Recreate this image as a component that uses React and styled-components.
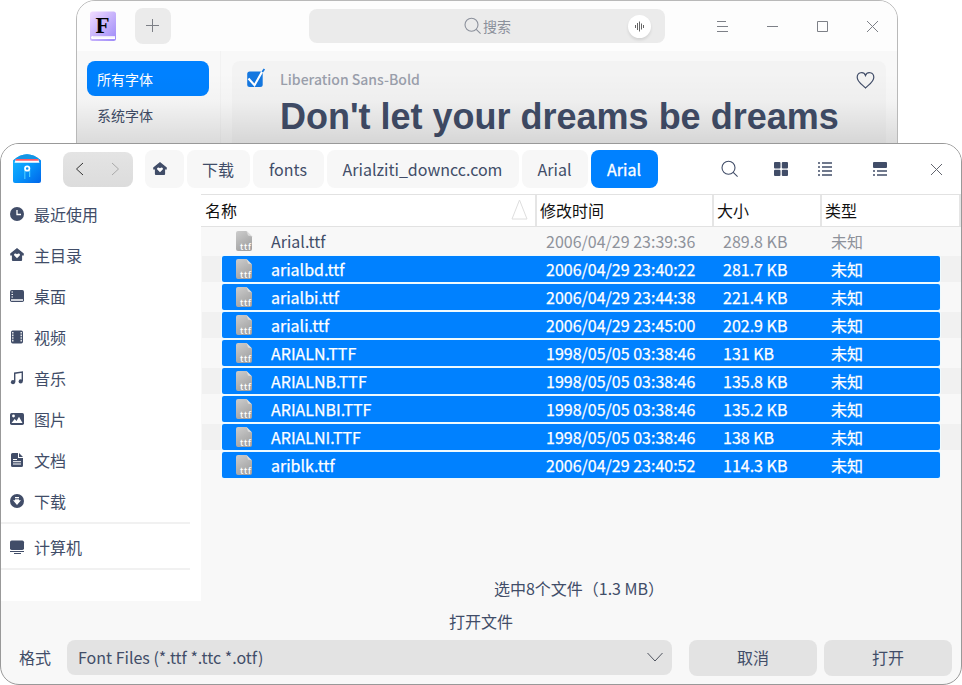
import React from "react";
import styled, { createGlobalStyle, css } from "styled-components";

const GlobalStyle = createGlobalStyle`
  * { box-sizing: border-box; }
  body {
    margin: 0;
    background: #fff;
    color: #414d68;
    font: 16px/24px "Noto Sans CJK SC", "Noto Sans", sans-serif;
    overflow: hidden;
  }
  svg { display: block; flex: none; }
`;

const Desktop = styled.div`
  position: relative;
  width: 962px;
  height: 685px;
  overflow: hidden;
`;

/* ---------- font manager window ---------- */

const ManagerWindow = styled.section`
  position: absolute;
  left: 76px;
  top: 0;
  width: 822px;
  height: 200px;
  border: 1px solid #b9b9b9;
  border-radius: 19px 19px 0 0;
  background: #f8f8f8;
  overflow: hidden;
`;

const ManagerTitlebar = styled.header`
  display: flex;
  align-items: center;
  height: 50px;
  padding: 0 18px 0 12px;
  background: #fdfdfd;
`;

const AddButton = styled.button`
  display: grid;
  place-items: center;
  width: 36px;
  height: 36px;
  margin: 0 138px 0 18px;
  padding: 0 1px 1px 0;
  border: 0;
  border-radius: 8px;
  background: #ebebeb;
`;

const SearchBox = styled.div`
  display: flex;
  align-items: center;
  width: 356px;
  height: 34px;
  padding: 0 14px 0 155px;
  border-radius: 8px;
  background: #ebebeb;
  color: #8b909b;
  font-size: 14px;
`;

const SearchLabel = styled.span`
  flex: 1;
  margin-left: 1px;
`;

const VoiceButton = styled.span`
  display: grid;
  place-items: center;
  width: 23px;
  height: 23px;
  border-radius: 50%;
  background: #fff;
  box-shadow: 0 2px 3px rgba(0, 0, 0, 0.1);
`;

const WindowControls = styled.div`
  display: flex;
  gap: 36px;
  margin-left: auto;
  padding-top: 2px;
`;

const ManagerBody = styled.div`
  display: flex;
  height: 150px;
`;

const CategoryList = styled.nav`
  width: 144px;
  padding: 10px 10px 0;
  border-right: 1px solid #f2f2f2;
`;

const Category = styled.div`
  width: 122px;
  height: 35px;
  margin-bottom: 2px;
  padding: 0 10px;
  border-radius: 8px;
  font-size: 14px;
  line-height: ${(p) => (p.$active ? 36 : 34)}px;
  background: ${(p) => (p.$active ? "#0081ff" : "transparent")};
  color: ${(p) => (p.$active ? "#fff" : "#414d68")};
`;

const PreviewCard = styled.article`
  display: flex;
  align-items: flex-start;
  width: 654px;
  margin: 10px 0 0 11px;
  padding: 7px 11px 0 13px;
  border-radius: 8px;
  background: #f3f3f3;
`;

const PreviewText = styled.div`
  flex: 1;
  margin-left: 13px;
`;

const FontName = styled.div`
  font-size: 14px;
  line-height: 23px;
  color: #9a9fab;
  font-weight: 500;
`;

const Sample = styled.div`
  font: bold 36px/41px "Liberation Sans", Arial, sans-serif;
  margin-top: 5px;
  white-space: nowrap;
`;

const FavoriteSlot = styled.span`
  padding-top: 3px;
`;

const Shade = styled.div`
  position: absolute;
  inset: 72px 0 auto;
  height: 71px;
  background: linear-gradient(rgba(0, 0, 0, 0) 0%, rgba(0, 0, 0, 0.02) 40%, rgba(0, 0, 0, 0.12) 100%);
`;

/* ---------- file dialog ---------- */

const Dialog = styled.section`
  position: absolute;
  left: 0;
  top: 143px;
  width: 962px;
  height: 542px;
  display: flex;
  flex-direction: column;
  border: 1px solid #999;
  border-radius: 19px;
  background: #f8f8f8;
  overflow: hidden;
`;

const Toolbar = styled.header`
  display: flex;
  align-items: center;
  height: 50px;
  padding: 0 17px 0 11px;
  background: #fff;
`;

const HistoryButtons = styled.div`
  display: flex;
  align-items: center;
  justify-content: space-between;
  width: 70px;
  height: 35px;
  margin: 0 12px 0 21px;
  padding: 0 12px 0 11px;
  border-radius: 8px;
  background: linear-gradient(#e4e4e4, #dcdcdc);
`;

const Breadcrumbs = styled.nav`
  display: flex;
  gap: 3px;
`;

const Crumb = styled.button`
  display: grid;
  place-items: center;
  width: ${(p) => p.$width}px;
  height: 38px;
  padding: 0 1px 0 0;
  border: 0;
  border-radius: 8px;
  font: inherit;
  -webkit-text-stroke: ${(p) => (p.$active ? "0.3px" : "0")};
  background: ${(p) => (p.$active ? "#0081ff" : "#f7f7f7")};
  color: ${(p) => (p.$active ? "#fff" : "#414d68")};
  white-space: nowrap;
`;

const HomeIconSlot = styled.span`
  margin-right: 8px;
`;

const ViewTools = styled.div`
  display: grid;
  grid-template-columns: 53px 44px 55px 57px 14px;
  align-items: center;
  margin-left: auto;
`;

const DialogBody = styled.div`
  display: flex;
  height: 407px;
`;

const Sidebar = styled.aside`
  width: 200px;
  background: #fff;
`;

const PlaceGroup = styled.div`
  width: 189px;
  padding-top: ${(p) => p.$top || 0}px;
  border-bottom: 2px solid #f1f1f1;
`;

const Place = styled.div`
  display: flex;
  align-items: center;
  gap: 9px;
  height: 41px;
  padding: 0 0 2px 9px;

  svg { margin-top: 1px; }
`;

const FilePane = styled.main`
  flex: 1;
  display: flex;
  flex-direction: column;
`;

const TableHead = styled.div`
  display: grid;
  grid-template-columns: 336px 177px 108px 139px;
  height: 33px;
  margin-bottom: 2px;
  border: solid #e2e2e2;
  border-width: 1px 0;
  background: #fff;
  color: #111;
`;

const HeadCell = styled.div`
  display: flex;
  align-items: center;
  justify-content: space-between;
  padding: 0 7px 2px ${(p) => (p.$first ? 4 : 3)}px;
  border-right: 2px solid #e5e5e5;
`;

const Rows = styled.div`
  display: flex;
  flex-direction: column;
  gap: 2px;
  margin-top: -1px;
`;

const RowStripe = styled.div`
  height: 26px;
  padding: 0 21px;
  background: linear-gradient(${(p) => (p.$odd ? "#f1f1f1, #f1f1f1" : "#f8f8f8, #f8f8f8")}) 1px 0 no-repeat;
`;

const FileRow = styled.div`
  display: grid;
  grid-template-columns: 49px 275px 177px 108px 1fr;
  align-items: center;
  height: 26px;
  border-radius: 2px;
  color: #8e929b;
  ${(p) =>
    p.$selected &&
    css`
      background: #0081ff;
      color: #fff;
      -webkit-text-stroke: 0.25px;
      box-shadow: 0 0 0 1px #edfaff;
    `}
`;

const IconCell = styled.span`
  padding-left: 13px;
  -webkit-text-stroke: 0;
`;

const FileName = styled.span`
  color: ${(p) => (p.$selected ? "#fff" : "#414d68")};
`;

const Status = styled.div`
  margin: auto 4px 1px 0;
  text-align: center;
`;

const Footer = styled.footer`
  flex: 1;
`;

const ActionTitle = styled.div`
  height: 38px;
  padding-top: 8px;
  text-align: center;
`;

const FormatRow = styled.div`
  display: flex;
  align-items: center;
  height: 37px;
  padding: 0 9px 0 18px;
`;

const FormatLabel = styled.span`
  padding-bottom: 2px;
`;

const FormatSelect = styled.div`
  display: flex;
  align-items: center;
  justify-content: space-between;
  width: 605px;
  height: 35px;
  margin: 0 17px 0 16px;
  padding: 0 9px 1px 11px;
  border-radius: 8px;
  background: #e3e3e3;
`;

const ActionButton = styled.button`
  width: 128px;
  height: 36px;
  margin-right: ${(p) => (p.$last ? 0 : 7)}px;
  padding: 0 0 2px;
  border: 0;
  border-radius: 8px;
  background: #e3e3e3;
  color: #414d68;
  font: inherit;
`;

/* ---------- icons ---------- */

const INK = "#414d68";

const LineIcon = ({ size = 13, d, color = "#7d8087", width = 1 }) => (
  <svg width={size} height={size} viewBox={`0 0 ${size} ${size}`} fill="none" stroke={color} strokeWidth={width}>
    <path d={d} />
  </svg>
);

const SearchIcon = ({ size = 18, color = INK }) => (
  <svg width={size} height={size} viewBox="0 0 18 18" fill="none" stroke={color} strokeWidth="1.1">
    <circle cx="7.500" cy="7.700" r="6.500" />
    <path d="m12.200 12.400 4.400 4.200" />
  </svg>
);

const FontLogo = () => (
  <svg width="28" height="32" viewBox="0 0 28 32">
    <defs>
      <linearGradient id="book" x1="0" y1="0" x2="1" y2="1">
        <stop offset="0" stopColor="#f2dcff" />
        <stop offset="1" stopColor="#9d8af8" />
      </linearGradient>
    </defs>
    <rect x="1" y="1.500" width="26" height="29.500" rx="2.500" fill="url(#book)" />
    <path d="M3.500 26H26v3H3.500a1.500 1.500 0 0 1 0-3Z" fill="#fff" />
    <path d="M4 26.800h22" stroke="#e4dcf8" />
    <text x="13.500" y="23" textAnchor="middle" fontFamily="Liberation Serif" fontWeight="bold" fontSize="23">F</text>
  </svg>
);

const CheckIcon = () => (
  <svg width="22" height="22" viewBox="0 0 22 22">
    <rect x="2.200" y="3.500" width="15.500" height="15.500" rx="2.500" fill="#1477e0" />
    <path d="M3.500 10.500 9.500 17.300 17.500 3" fill="none" stroke="#fff" strokeWidth="2.100" />
    <path d="m17.200 4 2.200-3" stroke="#1477e0" strokeWidth="1.800" />
  </svg>
);

const HeartIcon = () => (
  <svg width="19" height="19" viewBox="0 0 19 19" fill="none" stroke={INK} strokeWidth="1.2">
    <path d="M9.500 17C7.500 14.500 1.200 11.200 1.200 6.200c0-5 6.500-6.300 8.300-1.700 1.800-4.600 8.300-3.300 8.300 1.700 0 5-6.300 8.300-8.300 10.800Z" />
  </svg>
);

const VaultLogo = () => (
  <svg width="30" height="32" viewBox="0 0 30 32">
    <defs>
      <linearGradient id="vault" x1="0" y1="0" x2="1" y2="1">
        <stop offset="0" stopColor="#19baff" />
        <stop offset=".5" stopColor="#0797fb" />
        <stop offset="1" stopColor="#0065e9" />
      </linearGradient>
    </defs>
    <path d="M1 7.500Q15-5 29 7.500V28q0 2-2 2H3q-2 0-2-2Z" fill="url(#vault)" />
    <path d="M1 7.500Q15-5 29 7.500Z" fill="#1595e4" />
    <path d="M4 6h22l1.500 3.700h-25Z" fill="#fff" />
    <path d="M4 6h22l.5 1.700h-23Z" fill="#ff5968" />
    <path d="M12.800 17v9M17.600 17v7" stroke="#48c9ff" strokeWidth="1.2" />
    <circle cx="15.200" cy="15.500" r="2.200" fill="none" stroke="#fff" strokeWidth="1.800" />
  </svg>
);

const HomeShape = () => (
  <>
    <path d="M7 0 .2 5.600v2h1.700V12q0 1 1 1h8.200q1 0 1-1V7.600h1.700v-2Z" fill={INK} />
    <path d="M7 10.200 4.300 7.600c-1-1.600 1-3.200 2.700-1.400 1.700-1.800 3.700-.2 2.700 1.400Z" fill="#fff" />
  </>
);

const placeShapes = {
  recent: (
    <>
      <circle cx="7" cy="7" r="7" fill={INK} />
      <path d="M7 3v4.500h4" stroke="#fff" strokeWidth="1.3" fill="none" />
    </>
  ),
  home: <HomeShape />,
  desktop: (
    <>
      <rect y="1" width="14" height="12" rx="1.700" fill={INK} />
      <path d="M1 11h12" stroke="#fff" strokeWidth="1.500" />
      <path d="M1.500 3h1.500M1.500 5.500h1.500M1.500 8h1.500" stroke="#fff" />
    </>
  ),
  video: (
    <>
      <rect x="1" y="0.500" width="12" height="13" rx="1.700" fill={INK} />
      <path d="M2.800 2v10.500M11.200 2v10.500" stroke="#fff" strokeWidth="1.3" strokeDasharray="1.6 1" />
    </>
  ),
  music: (
    <>
      <path d="M4.700 11V2.200L12.300 1v9" fill="none" stroke={INK} strokeWidth="1.4" />
      <circle cx="3" cy="11.200" r="2.100" fill={INK} />
      <circle cx="10.700" cy="10.400" r="2.100" fill={INK} />
    </>
  ),
  pictures: (
    <>
      <rect y="1" width="14" height="12" rx="1.700" fill={INK} />
      <circle cx="3.500" cy="4" r="1.400" fill="#fff" />
      <path d="m1.500 11 3.200-4 1.800 2L9 4.700l3.500 6.300Z" fill="#fff" />
    </>
  ),
  documents: (
    <>
      <path d="M2.500 0H8v5h5v7.500q0 1.500-1.500 1.500h-9Q1 14 1 12.500v-11Q1 0 2.500 0ZM9 0l4 4H9Z" fill={INK} />
      <path d="M3 6.500h4M3 8.700h8M3 11h8" stroke="#fff" />
    </>
  ),
  downloads: (
    <>
      <circle cx="7" cy="7" r="7" fill={INK} />
      <path d="M5 3h4v3.200h2L7 11 3 6.200h2Z" fill="#fff" />
      <path d="M5 4.800h4" stroke={INK} />
    </>
  ),
  computer: (
    <>
      <rect y="0.500" width="14" height="9.500" rx="1.700" fill={INK} />
      <path d="M0 11.500h14M4 13.500h7" stroke={INK} />
    </>
  ),
};

const PlaceIcon = ({ name }) => (
  <svg width="15" height="15" viewBox="0 0 15 15">{placeShapes[name]}</svg>
);

const TtfIcon = () => (
  <svg width="18" height="22" viewBox="0 0 18 22">
    <defs>
      <linearGradient id="sheet" x1="0" y1="0" x2="0.5" y2="1">
        <stop offset="0" stopColor="#cdcdcd" />
        <stop offset="1" stopColor="#a2a2a2" />
      </linearGradient>
    </defs>
    <path d="M3 1h8.500L17 6.500V19q0 2-2 2H3q-2 0-2-2V3q0-2 2-2Z" fill="url(#sheet)" />
    <path d="M11.500 1 17 6.500l-4-1Z" fill="#ddd" />
    <text x="5" y="19.800" fontFamily="Noto Sans CJK SC" fontWeight="500" fontSize="8.500" letterSpacing="0.700" fill="#fff">ttf</text>
  </svg>
);

const places = [
  ["recent", "最近使用"],
  ["home", "主目录"],
  ["desktop", "桌面"],
  ["video", "视频"],
  ["music", "音乐"],
  ["pictures", "图片"],
  ["documents", "文档"],
  ["downloads", "下载"],
];

const crumbs = [
  ["下载", 63],
  ["fonts", 71],
  ["Arialziti_downcc.com", 192],
  ["Arial", 66],
];

const files = [
  ["Arial.ttf", "2006/04/29 23:39:36", "289.8 KB"],
  ["arialbd.ttf", "2006/04/29 23:40:22", "281.7 KB"],
  ["arialbi.ttf", "2006/04/29 23:44:38", "221.4 KB"],
  ["ariali.ttf", "2006/04/29 23:45:00", "202.9 KB"],
  ["ARIALN.TTF", "1998/05/05 03:38:46", "131 KB"],
  ["ARIALNB.TTF", "1998/05/05 03:38:46", "135.8 KB"],
  ["ARIALNBI.TTF", "1998/05/05 03:38:46", "135.2 KB"],
  ["ARIALNI.TTF", "1998/05/05 03:38:46", "138 KB"],
  ["ariblk.ttf", "2006/04/29 23:40:52", "114.3 KB"],
];

function FontManager() {
  return (
    <ManagerWindow>
      <ManagerTitlebar>
        <FontLogo />
        <AddButton aria-label="Add">
          <LineIcon d="M6.500 0v13M0 6.500h13" />
        </AddButton>
        <SearchBox>
          <SearchIcon color="#8b909b" />
          <SearchLabel>搜索</SearchLabel>
          <VoiceButton>
            <LineIcon size={11} width={0.9} color="#555" d="M1.500 4v3M3.500 2v7M5.500 .5v10M7.500 2.500v6M9.500 4v3" />
          </VoiceButton>
        </SearchBox>
        <WindowControls>
          <LineIcon size={14} d="M2 1.500h9M2 6.500h11M2 11.500h11" />
          <LineIcon size={14} d="M2 6.500h11" />
          <LineIcon size={14} d="M2.500 1.500h10v10h-10Z" />
          <LineIcon size={14} d="m2 1 11 11M13 1 2 12" />
        </WindowControls>
      </ManagerTitlebar>
      <ManagerBody>
        <CategoryList>
          <Category $active>所有字体</Category>
          <Category>系统字体</Category>
        </CategoryList>
        <PreviewCard>
          <CheckIcon />
          <PreviewText>
            <FontName>Liberation Sans-Bold</FontName>
            <Sample>Don't let your dreams be dreams</Sample>
          </PreviewText>
          <FavoriteSlot><HeartIcon /></FavoriteSlot>
        </PreviewCard>
      </ManagerBody>
      <Shade />
    </ManagerWindow>
  );
}

function FileDialog() {
  return (
    <Dialog>
      <Toolbar>
        <VaultLogo />
        <HistoryButtons>
          <LineIcon size={14} color="#333" d="M9 1 2.500 7 9 13" />
          <LineIcon size={14} color="#a9a9a9" d="m5 1 6.500 6L5 13" />
        </HistoryButtons>
        <Breadcrumbs>
          <Crumb $width={39}>
            <HomeIconSlot>
              <svg width="14" height="14" viewBox="0 0 14 14"><HomeShape /></svg>
            </HomeIconSlot>
          </Crumb>
          {crumbs.map(([label, width]) => (
            <Crumb key={label} $width={width}>{label}</Crumb>
          ))}
          <Crumb $width={67} $active>Arial</Crumb>
        </Breadcrumbs>
        <ViewTools>
          <SearchIcon />
          <svg width="14" height="14" viewBox="0 0 14 14" fill={INK}>
            <rect width="6.500" height="6.500" rx="1" />
            <rect x="7.800" width="6.200" height="6.500" rx="1" />
            <rect y="7.800" width="6.500" height="6.200" rx="1" />
            <rect x="7.800" y="7.800" width="6.200" height="6.200" rx="1" />
          </svg>
          <svg width="14" height="14" viewBox="0 0 14 14" stroke={INK} strokeWidth="1.700">
            <path d="M0 1h2M0 5h2M0 9h2M0 13h2M4 1h10M4 5h10M4 9h10M4 13h10" />
          </svg>
          <svg width="14" height="14" viewBox="0 0 14 14" stroke={INK} strokeWidth="1.700">
            <rect width="14" height="6" rx="1" fill={INK} stroke="none" />
            <path d="M0 9h2M0 13h2M4 9h10M4 13h10" />
          </svg>
          <LineIcon size={14} color="#62656e" d="m1 2 11 11M12 2 1 13" />
        </ViewTools>
      </Toolbar>
      <DialogBody>
        <Sidebar>
          <PlaceGroup>
            {places.map(([name, label]) => (
              <Place key={name}><PlaceIcon name={name} />{label}</Place>
            ))}
          </PlaceGroup>
          <PlaceGroup $top={3}>
            <Place><PlaceIcon name="computer" />计算机</Place>
          </PlaceGroup>
        </Sidebar>
        <FilePane>
          <TableHead>
            <HeadCell $first>
              名称
              <svg width="17" height="21" viewBox="0 0 17 21" fill="none" stroke="#dedede">
                <path d="M8.500 1 16 20H1Z" />
              </svg>
            </HeadCell>
            <HeadCell>修改时间</HeadCell>
            <HeadCell>大小</HeadCell>
            <HeadCell>类型</HeadCell>
          </TableHead>
          <Rows>
            {files.map(([name, date, size], i) => (
              <RowStripe key={name} $odd={i % 2 === 1}>
                <FileRow $selected={i > 0}>
                  <IconCell><TtfIcon /></IconCell>
                  <FileName $selected={i > 0}>{name}</FileName>
                  <span>{date}</span>
                  <span>{size}</span>
                  <span>未知</span>
                </FileRow>
              </RowStripe>
            ))}
          </Rows>
          <Status>选中8个文件（1.3 MB）</Status>
        </FilePane>
      </DialogBody>
      <Footer>
        <ActionTitle>打开文件</ActionTitle>
        <FormatRow>
          <FormatLabel>格式</FormatLabel>
          <FormatSelect>
            Font Files (*.ttf *.ttc *.otf)
            <LineIcon size={16} color="#50545f" d="m.5 4 7.500 8 7.500-8" />
          </FormatSelect>
          <ActionButton>取消</ActionButton>
          <ActionButton $last>打开</ActionButton>
        </FormatRow>
      </Footer>
    </Dialog>
  );
}

export default function App() {
  return (
    <>
      <GlobalStyle />
      <Desktop>
        <FontManager />
        <FileDialog />
      </Desktop>
    </>
  );
}
